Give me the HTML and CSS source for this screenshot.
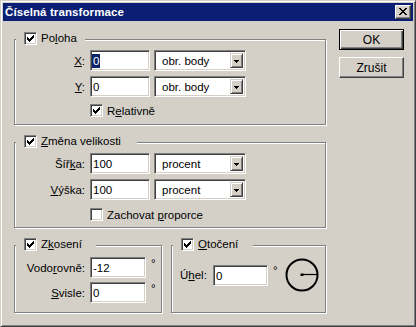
FILE: index.html
```html
<!DOCTYPE html>
<html lang="cs">
<head>
<meta charset="utf-8">
<title>Číselná transformace</title>
<link rel="stylesheet" href="styles.css">
</head>
<body>
<div class="window">
  <div class="titlebar">
    <span class="title">Číselná transformace</span>
    <span class="close"><svg width="8" height="7" viewBox="0 0 8 7" shape-rendering="crispEdges"><path d="M0 0h2v1h-2zM6 0h2v1h-2zM1 1h2v1h-2zM5 1h2v1h-2zM2 2h4v1h-4zM3 3h2v1h-2zM2 4h4v1h-4zM1 5h2v1h-2zM5 5h2v1h-2zM0 6h2v1h-2zM6 6h2v1h-2z" fill="#000"/></svg></span>
  </div>
  <div class="client">
    <div class="left">
      <div class="group g1">
        <div class="legend lg1"><span class="cb on"></span><span>Po<u>l</u>oha</span></div>
        <div class="form">
          <span class="lbl"><u>X</u>:</span>
          <span class="edit"><span class="sel">0</span></span>
          <span class="combo"><span class="ctext">obr. body</span><span class="drop"></span></span>
          <span class="lbl"><u>Y</u>:</span>
          <span class="edit">0</span>
          <span class="combo"><span class="ctext">obr. body</span><span class="drop"></span></span>
          <span class="chk c-rel"><span class="cb on"></span><span>R<u>e</u>lativně</span></span>
        </div>
      </div>
      <div class="group g2">
        <div class="legend lg2"><span class="cb on"></span><span><u>Z</u>měna velikosti</span></div>
        <div class="form">
          <span class="lbl">Šíř<u>k</u>a:</span>
          <span class="edit">100</span>
          <span class="combo"><span class="ctext">procent</span><span class="drop"></span></span>
          <span class="lbl"><u>V</u>ýška:</span>
          <span class="edit">100</span>
          <span class="combo"><span class="ctext">procent</span><span class="drop"></span></span>
          <span class="chk c-prop"><span class="cb"></span><span>Zachovat <u>p</u>roporce</span></span>
        </div>
      </div>
      <div class="bottom">
        <div class="group g3">
          <div class="legend lg3"><span class="cb on"></span><span>Z<u>k</u>osení</span></div>
          <div class="form3">
            <span class="lbl">Vodo<u>r</u>ovně:</span>
            <span class="edit e56">-12</span>
            <span class="deg">°</span>
            <span class="lbl"><u>S</u>visle:</span>
            <span class="edit e56">0</span>
            <span class="deg">°</span>
          </div>
        </div>
        <div class="group g4">
          <div class="legend lg4"><span class="cb on"></span><span><u>O</u>točení</span></div>
          <div class="rot">
            <span class="lbl4">Ú<u>h</u>el:</span>
            <span class="edit e55">0</span>
            <span class="deg">°</span>
            <svg class="dial" width="36" height="36" viewBox="0 0 36 36">
              <circle cx="18" cy="18" r="15.5" fill="none" stroke="#000" stroke-width="2"/>
              <path d="M18 17.5H33" stroke="#000" stroke-width="1.2"/>
              <rect x="16.5" y="16.5" width="3" height="2.5" fill="#000"/>
            </svg>
          </div>
        </div>
      </div>
    </div>
    <div class="right">
      <span class="btn default"><span class="btn-in">OK</span></span>
      <span class="btn"><span class="btn-in">Zrušit</span></span>
    </div>
  </div>
</div>
</body>
</html>
```

FILE: styles.css
```css
html, body {
  margin: 0;
  padding: 0;
  background: #d4d0c8;
}
body {
  font-family: "Liberation Sans", Arial, sans-serif;
  font-size: 11.5px;
  color: #000;
}
u { text-decoration: underline; text-underline-offset: 1px; }

.window {
  width: 416px;
  height: 327px;
  box-sizing: border-box;
  background: #d4d0c8;
  border: 1px solid;
  border-color: #d4d0c8 #404040 #404040 #d4d0c8;
  box-shadow: inset 1px 1px 0 #fff, inset -1px -1px 0 #808080;
  padding: 2px;
}

.titlebar {
  height: 18px;
  background: #0a1f74;
  display: flex;
  align-items: center;
  justify-content: space-between;
  padding: 0 2px 0 2px;
}
.title {
  color: #fff;
  font-weight: bold;
  font-size: 11.5px;
  letter-spacing: 0.1px;
}
.close {
  width: 16px;
  height: 14px;
  box-sizing: border-box;
  background: #d4d0c8;
  border: 1px solid;
  border-color: #fff #404040 #404040 #fff;
  box-shadow: inset -1px -1px 0 #808080;
  display: flex;
  align-items: center;
  justify-content: center;
  padding: 0 1px 1px 0;
}
.close svg { display: block; }

.client {
  display: flex;
  padding-left: 11px;
}
.left {
  width: 312px;
  margin-top: 18px;
  display: flex;
  flex-direction: column;
  gap: 17px;
}
.right {
  margin-left: 13px;
  margin-top: 8px;
  display: flex;
  flex-direction: column;
  gap: 7px;
}

.group {
  position: relative;
  box-sizing: border-box;
  border: 1px solid #808080;
  box-shadow: inset 1px 1px 0 #fff, 1px 1px 0 #fff;
}
.g1, .g2 { height: 86px; padding-top: 10px; }
.legend {
  position: absolute;
  top: -8px;
  left: 1px;
  height: 13px;
  box-sizing: border-box;
  padding-left: 8px;
  background: #d4d0c8;
  display: flex;
  align-items: center;
  gap: 4px;
  line-height: 13px;
}
.lg1 { width: 69px; }
.lg2 { width: 121px; }
.lg3 { width: 80px; }
.lg4 { width: 80px; }

.cb {
  width: 13px;
  height: 13px;
  box-sizing: border-box;
  background: #fff;
  border: 1px solid;
  border-color: #808080 #fff #fff #808080;
  box-shadow: inset 1px 1px 0 #404040, inset -1px -1px 0 #d4d0c8;
  flex: none;
  position: relative;
}
.cb.on::after {
  content: "";
  position: absolute;
  left: 2px;
  top: 2px;
  width: 7px;
  height: 7px;
  background: url("data:image/svg+xml;utf8,<svg xmlns='http://www.w3.org/2000/svg' width='7' height='7' viewBox='0 0 7 7' shape-rendering='crispEdges'><path d='M6 0h1v1h-1zM5 1h2v1h-2zM0 2h1v1h-1zM4 2h3v1h-3zM0 3h2v1h-2zM3 3h3v1h-3zM0 4h5v1h-5zM1 5h3v1h-3zM2 6h1v1h-1z' fill='black'/></svg>") no-repeat;
}

.form {
  display: grid;
  grid-template-columns: 71px 60px 92px;
  grid-auto-rows: 21px;
  column-gap: 4px;
  row-gap: 5px;
}
.lbl {
  text-align: right;
  align-self: center;
  padding-right: 1px;
  white-space: nowrap;
}
.edit {
  box-sizing: border-box;
  height: 21px;
  background: #fff;
  border: 1px solid;
  border-color: #808080 #fff #fff #808080;
  box-shadow: inset 1px 1px 0 #404040, inset -1px -1px 0 #d4d0c8;
  padding: 2px 2px 0 2px;
  line-height: 16px;
  white-space: nowrap;
}
.sel {
  background: #0a246a;
  color: #fff;
  display: inline-block;
  line-height: 14px;
  padding: 0 1px;
  margin-left: -1px;
}
.combo {
  box-sizing: border-box;
  height: 21px;
  background: #fff;
  border: 1px solid;
  border-color: #808080 #fff #fff #808080;
  box-shadow: inset 1px 1px 0 #404040, inset -1px -1px 0 #d4d0c8;
  padding: 2px 2px 2px 7px;
  display: flex;
  align-items: stretch;
  justify-content: space-between;
}
.ctext { line-height: 16px; white-space: nowrap; }
.drop {
  width: 13px;
  box-sizing: border-box;
  background: #d4d0c8 url("data:image/svg+xml;utf8,<svg xmlns='http://www.w3.org/2000/svg' width='5' height='3' viewBox='0 0 5 3' shape-rendering='crispEdges'><path d='M0 0h5v1h-5zM1 1h3v1h-3zM2 2h1v1h-1z' fill='black'/></svg>") no-repeat center 6px;
  border: 1px solid;
  border-color: #d4d0c8 #404040 #404040 #d4d0c8;
  box-shadow: inset 1px 1px 0 #fff, inset -1px -1px 0 #808080;
}

.chk {
  display: flex;
  align-items: center;
  gap: 4px;
  grid-column: 2 / 4;
  height: 13px;
}
.c-rel { margin-top: 2px; }
.c-prop { margin-top: 3px; }

.bottom {
  display: flex;
  gap: 9px;
}
.g3 {
  width: 148px;
  height: 68px;
  padding-top: 11px;
}
.form3 {
  display: grid;
  grid-template-columns: 71px 56px auto;
  grid-auto-rows: 21px;
  column-gap: 4px;
  row-gap: 4px;
}
.e56, .e55 { width: auto; }
.deg {
  align-self: start;
  line-height: 12px;
  padding-left: 1px;
}
.g4 {
  width: 155px;
  height: 68px;
  padding: 10px 0 0 8px;
}
.rot {
  display: flex;
  align-items: center;
  height: 38px;
}
.lbl4 { width: 33px; white-space: nowrap; }
.e55 { width: 55px; }
.rot .deg { margin-left: 4px; align-self: center; margin-top: -10px; }
.dial { margin-left: 6px; display: block; }

.btn {
  width: 65px;
  height: 21px;
  box-sizing: border-box;
  display: flex;
  align-items: center;
  justify-content: center;
  background: #d4d0c8;
  border: 1px solid;
  border-color: #fff #404040 #404040 #fff;
  box-shadow: inset -1px -1px 0 #808080;
  font-size: 12px;
}
.btn.default {
  border: 1px solid #000;
  box-shadow: inset 1px 1px 0 #fff, inset -1px -1px 0 #404040, inset -2px -2px 0 #808080;
}
.btn-in { line-height: 14px; }
```
